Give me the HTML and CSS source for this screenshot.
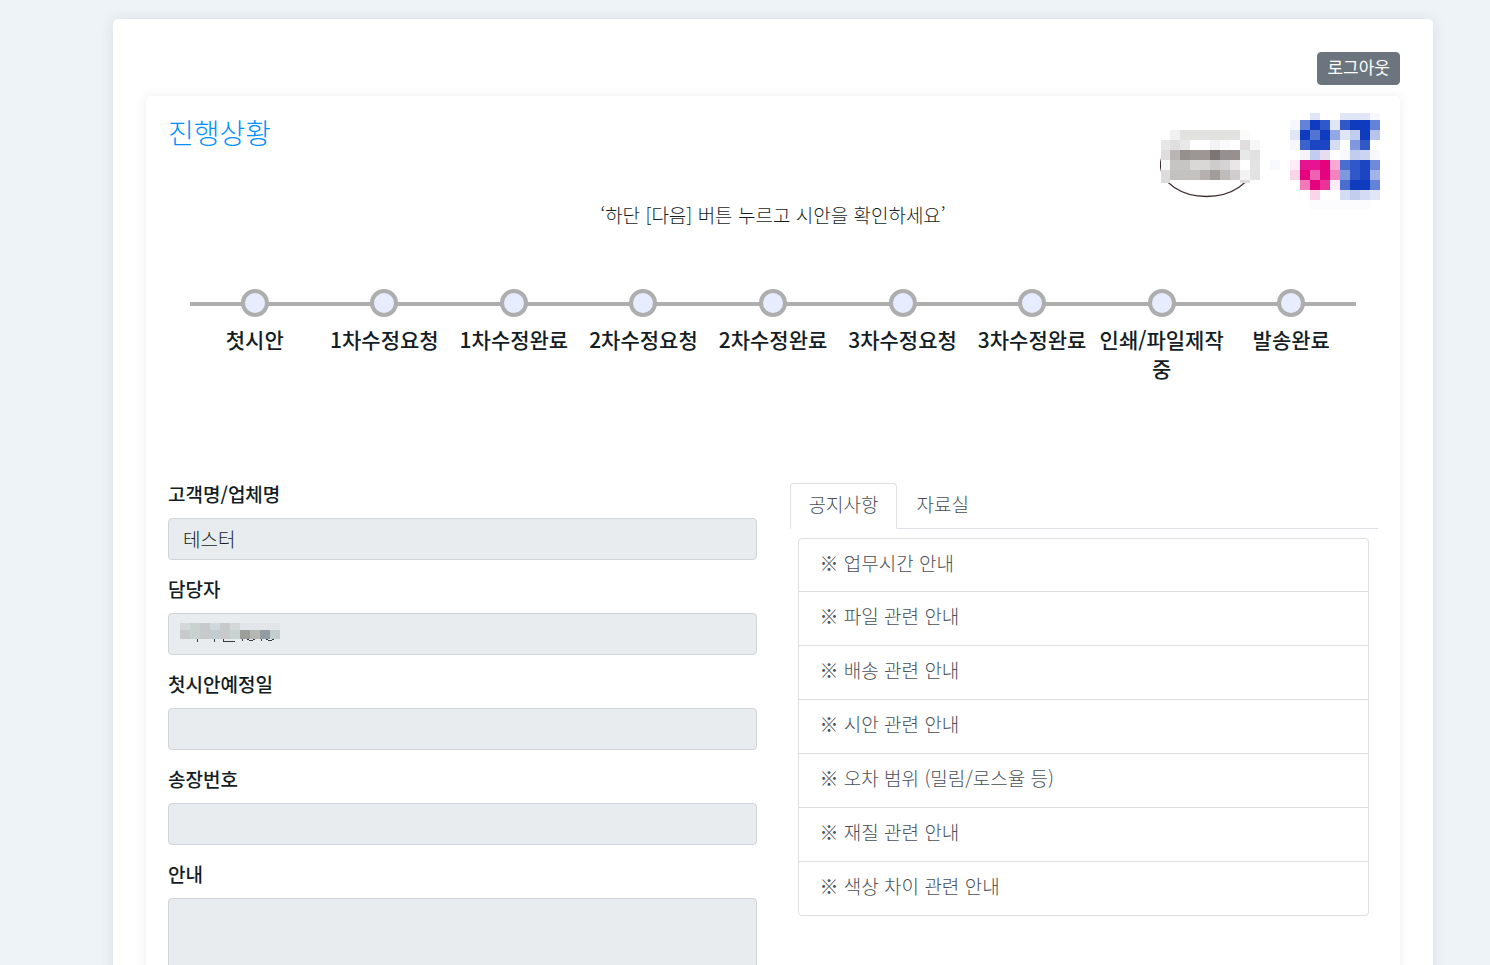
FILE: index.html
```
<!DOCTYPE html>
<html lang="ko">
<head>
    <meta charset="UTF-8">
    <meta name="viewport" content="width=device-width, initial-scale=1.0">
    <title>진행상황</title>
    <link rel="stylesheet" href="styles.css">
</head>
<body>
    <main class="page">
        <div class="topbar">
            <button type="button" class="btn-logout">로그아웃</button>
        </div>

        <section class="card">
            <div class="card-header">
                <h1 class="title">진행상황</h1>
                <svg class="logo" width="220" height="97" viewBox="1160 113 220 97" shape-rendering="crispEdges" aria-hidden="true">
                    <ellipse cx="1206.500" cy="165" rx="46" ry="31.500" fill="none" stroke="#3a302f" stroke-width="1.300" shape-rendering="auto"/>
                    <path fill="#fff" d="M1161 125h99v58h-99z"/>
                    <!-- row 1 -->
                    <path fill="#f1f1f1" d="M1170 130h10v10h-10z"/>
                    <path fill="#e2e2e1" d="M1180 130h60v10h-60z"/>
                    <path fill="#fbfbfb" d="M1240 130h10v10h-10z"/>
                    <!-- row 2 -->
                    <path fill="#e8e7e7" d="M1161 140h9v10h-9z"/>
                    <path fill="#e0dfdf" d="M1170 140h10v10h-10z"/>
                    <path fill="#e9e8e8" d="M1180 140h10v10h-10z"/>
                    <path fill="#f3f3f5" d="M1210 140h10v10h-10z"/>
                    <path fill="#fafafa" d="M1220 140h10v10h-10z"/>
                    <path fill="#dfdddd" d="M1240 140h10v10h-10z"/>
                    <path fill="#f7f7f7" d="M1250 140h10v10h-10z"/>
                    <!-- row 3 -->
                    <path fill="#dfddde" d="M1161 150h9v10h-9z"/>
                    <path fill="#b9b5b4" d="M1170 150h10v10h-10z"/>
                    <path fill="#958f8d" d="M1180 150h10v10h-10z"/>
                    <path fill="#9c9795" d="M1190 150h20v10h-20z"/>
                    <path fill="#7d7573" d="M1210 150h10v10h-10z"/>
                    <path fill="#969190" d="M1220 150h20v10h-20z"/>
                    <path fill="#e9e8e8" d="M1240 150h10v10h-10z"/>
                    <path fill="#e2e1e1" d="M1250 150h10v10h-10z"/>
                    <!-- row 4 -->
                    <path fill="#f7f7f7" d="M1161 160h9v10h-9z"/>
                    <path fill="#c6c5c4" d="M1170 160h20v10h-20z"/>
                    <path fill="#d8d8d7" d="M1190 160h20v10h-20z"/>
                    <path fill="#cecdcc" d="M1210 160h10v10h-10z"/>
                    <path fill="#d5d3d3" d="M1220 160h10v10h-10z"/>
                    <path fill="#e8e6e6" d="M1230 160h10v10h-10z"/>
                    <path fill="#e4e3e3" d="M1250 160h10v10h-10z"/>
                    <!-- row 5 -->
                    <path fill="#dddbdb" d="M1161 170h9v10h-9z"/>
                    <path fill="#c3c2c1" d="M1170 170h30v10h-30z"/>
                    <path fill="#b4b1b0" d="M1200 170h10v10h-10z"/>
                    <path fill="#a29c9b" d="M1210 170h10v10h-10z"/>
                    <path fill="#bfbcbc" d="M1220 170h10v10h-10z"/>
                    <path fill="#cfcdcd" d="M1230 170h10v10h-10z"/>
                    <path fill="#f3f3f3" d="M1240 170h10v10h-10z"/>
                    <path fill="#e3e2e2" d="M1250 170h10v10h-10z"/>
                    <path fill="#dddbdb" d="M1161 180h9v3h-9zM1240 180h10v3h-10z"/>
                    <path fill="#f8f9fd" d="M1270 160h10v10h-10z"/>

                    <!-- blue tiles -->
                    <path fill="#e1e6f6" d="M1310 113h10v7h-10zM1340 113h30v7h-30zM1330 120h10v10h-10zM1290 130h10v10h-10zM1340 130h10v10h-10zM1370 190h10v10h-10z"/>
                    <path fill="#f7f8fd" d="M1370 113h10v7h-10zM1290 120h10v10h-10zM1290 140h10v10h-10zM1340 150h10v10h-10zM1370 150h10v10h-10z"/>
                    <path fill="#0f3bbf" d="M1310 120h10v10h-10zM1300 130h10v10h-10zM1320 130h10v10h-10zM1350 120h20v10h-20zM1360 130h10v10h-10zM1350 180h20v10h-20z"/>
                    <path fill="#1b45c2" d="M1310 140h20v10h-20zM1360 160h10v20h-10z"/>
                    <path fill="#3058c9" d="M1320 120h10v10h-10zM1340 120h10v10h-10zM1360 140h10v10h-10zM1350 160h10v20h-10z"/>
                    <path fill="#3c62cd" d="M1300 140h10v10h-10z"/>
                    <path fill="#4a6dd0" d="M1340 160h10v10h-10zM1340 180h10v10h-10z"/>
                    <path fill="#5474d2" d="M1310 130h10v10h-10z"/>
                    <path fill="#6482d7" d="M1300 120h10v10h-10zM1370 120h10v10h-10zM1370 180h10v10h-10z"/>
                    <path fill="#708ada" d="M1370 160h10v10h-10z"/>
                    <path fill="#8099de" d="M1350 140h10v10h-10zM1340 170h10v10h-10z"/>
                    <path fill="#93a8e2" d="M1330 130h10v10h-10z"/>
                    <path fill="#a3b3e6" d="M1370 170h10v10h-10z"/>
                    <path fill="#b6c4ec" d="M1370 130h10v10h-10z"/>
                    <path fill="#c1ccee" d="M1310 150h10v10h-10zM1350 130h10v10h-10zM1350 150h10v10h-10zM1350 190h10v10h-10z"/>
                    <path fill="#cbd4f1" d="M1360 150h10v10h-10z"/>
                    <path fill="#d4dcf4" d="M1330 140h10v10h-10zM1340 190h10v10h-10zM1360 190h10v10h-10z"/>

                    <!-- pink tiles -->
                    <path fill="#f6f2f8" d="M1300 150h10v10h-10z"/>
                    <path fill="#e6def0" d="M1320 150h10v10h-10z"/>
                    <path fill="#e61490" d="M1300 160h20v10h-20z"/>
                    <path fill="#e4027f" d="M1320 160h10v20h-10zM1300 170h10v10h-10zM1310 180h10v10h-10z"/>
                    <path fill="#ef62b2" d="M1310 170h10v10h-10z"/>
                    <path fill="#f178bb" d="M1300 180h10v10h-10z"/>
                    <path fill="#e93399" d="M1320 180h10v10h-10z"/>
                    <path fill="#f7a9d3" d="M1330 160h10v10h-10z"/>
                    <path fill="#f382bf" d="M1330 170h10v10h-10z"/>
                    <path fill="#fdebf5" d="M1290 160h10v10h-10zM1330 180h10v10h-10z"/>
                    <path fill="#fad5ea" d="M1290 170h10v10h-10zM1310 190h10v10h-10z"/>
                    <path fill="#fcfcfe" d="M1310 200h60v10h-60z"/>
                </svg>
            </div>
            <p class="notice">‘하단 [다음] 버튼 누르고 시안을 확인하세요’</p>

            <ol class="steps">
                <li>첫시안</li>
                <li>1차수정요청</li>
                <li>1차수정완료</li>
                <li>2차수정요청</li>
                <li>2차수정완료</li>
                <li>3차수정요청</li>
                <li>3차수정완료</li>
                <li>인쇄/파일제작중</li>
                <li>발송완료</li>
            </ol>

            <div class="columns">
                <form class="info">
                    <label for="customer">고객명/업체명</label>
                    <input type="text" id="customer" value="테스터" readonly>

                    <label for="manager">담당자</label>
                    <div class="masked">
                        <input type="text" id="manager" readonly>
                        <svg class="mask" width="100" height="20" viewBox="0 0 100 20" shape-rendering="crispEdges" aria-hidden="true">
                            <path fill="#d5d8d9" d="M0 0h10v7H0zM50 0h10v7H50z"/>
                            <path fill="#c8d3d0" d="M10 0h10v16H10zM50 7h10v9H50z"/>
                            <path fill="#c8c9ca" d="M0 7h10v9H0zM20 0h10v16H20zM40 0h10v16H40z"/>
                            <path fill="#d0d8dc" d="M30 0h10v7H30z"/>
                            <path fill="#c2cdd0" d="M30 7h10v9H30zM90 7h10v9H90z"/>
                            <path fill="#e3e6e9" d="M60 0h40v7H60z"/>
                            <path fill="#9b9f9b" d="M60 7h10v9H60z"/>
                            <path fill="#b5b8b2" d="M70 7h10v9H70z"/>
                            <path fill="#939ca2" d="M80 7h10v9H80z"/>
                            <path fill="none" stroke="#333a40" d="M17 16v3M34 16v3M43.500 16v2.500h11M62.500 16v2M67 16.500h2M69 17.500h4M73 16.500h2M81.500 16v2M86 16.500h2M88 17.500h4M92 16.500h2"/>
                        </svg>
                    </div>

                    <label for="draftDate">첫시안예정일</label>
                    <input type="text" id="draftDate" readonly>

                    <label for="invoiceNo">송장번호</label>
                    <input type="text" id="invoiceNo" readonly>

                    <label for="guide">안내</label>
                    <textarea id="guide" rows="5" readonly></textarea>
                </form>

                <div class="board">
                    <nav class="tabs">
                        <a href="#notices" class="active">공지사항</a>
                        <a href="#files">자료실</a>
                    </nav>
                    <div class="list" id="notices">
                        <a href="#hours">※ 업무시간 안내</a>
                        <a href="#file">※ 파일 관련 안내</a>
                        <a href="#delivery">※ 배송 관련 안내</a>
                        <a href="#draft">※ 시안 관련 안내</a>
                        <a href="#margin">※ 오차 범위 (밀림/로스율 등)</a>
                        <a href="#material">※ 재질 관련 안내</a>
                        <a href="#color">※ 색상 차이 관련 안내</a>
                    </div>
                </div>
            </div>
        </section>
    </main>
</body>
</html>
```
FILE: styles.css
```
*,
*::before {
    box-sizing: border-box;
}

body {
    margin: 0;
    padding: 19px 57px 19px 113px;
    background-color: #eef3f7;
    color: #141d24;
    font-family: "Noto Sans CJK KR", sans-serif;
    font-size: 19px;
    font-weight: 300;
    line-height: 29px;
}

.page {
    padding: 33px;
    background-color: #fff;
    border-radius: 5px;
    box-shadow: 0 0 14px rgba(0, 40, 50, 0.1);
}

.topbar {
    display: flex;
    justify-content: flex-end;
    margin-bottom: 11px;
}

.btn-logout {
    padding: 3px 9px 6px;
    border: 1px solid #6c757d;
    border-radius: 4px;
    background-color: #6c757d;
    color: #fff;
    font: inherit;
    font-size: 17px;
    font-weight: 400;
    line-height: 22px;
    cursor: pointer;
}

.card {
    padding: 17px 22px 22px;
    border-radius: 5px;
    box-shadow: 0 0 12px rgba(0, 0, 0, 0.07);
}

.card-header {
    display: flex;
    justify-content: space-between;
    height: 87px;
}

.title {
    margin: 0;
    color: #0090ff;
    font-size: 28px;
    font-weight: 300;
    line-height: 39px;
}

.logo {
    margin-right: -2px;
}

.notice {
    margin: 0;
    text-align: center;
}

.steps {
    display: grid;
    grid-template-columns: repeat(9, minmax(0, 1fr));
    min-height: 144px;
    margin: 60px 22px 46px;
    padding: 0;
    list-style: none;
    font-size: 21px;
    font-weight: 500;
    text-align: center;
    background: linear-gradient(#aeaeae, #aeaeae) 0 13px / 100% 4px no-repeat;
}

.steps li {
    word-break: break-all;
}

.steps li::before {
    content: "";
    display: block;
    width: 28px;
    height: 28px;
    margin: 0 auto 8px;
    border: 4px solid #aeaeae;
    border-radius: 50%;
    background-color: #e7ecfe;
}

.columns {
    display: grid;
    grid-template-columns: 1fr 1fr;
    gap: 33px;
}

.info label {
    display: block;
    margin-bottom: 10px;
    font-weight: 500;
}

.info input,
.info textarea {
    display: block;
    width: 100%;
    height: 42px;
    margin-bottom: 14px;
    padding: 5px 14px 7px;
    border: 1px solid #ced4da;
    border-radius: 4px;
    background-color: #e9ecef;
    color: #141d24;
    font: inherit;
    outline: none;
}

.info textarea {
    height: 150px;
    resize: none;
}

.masked {
    position: relative;
}

.mask {
    position: absolute;
    top: 10px;
    left: 12px;
}

.tabs {
    display: flex;
    margin-top: 4px;
    border-bottom: 1px solid #dee2e6;
}

.tabs a {
    margin-bottom: -1px;
    padding: 5px 18px 10px;
    border: 1px solid transparent;
    border-radius: 4px 4px 0 0;
    color: #495057;
    text-decoration: none;
}

.tabs .active {
    border-color: #dee2e6 #dee2e6 #fff;
    background-color: #fff;
}

.list {
    margin: 9px 9px 0 8px;
    border: 1px solid #dfdfdf;
    border-radius: 4px;
}

.list a {
    display: block;
    padding: 9px 21px 14px;
    color: #495057;
    text-decoration: none;
}

.list a + a {
    padding-bottom: 15px;
    border-top: 1px solid #dfdfdf;
}
```
